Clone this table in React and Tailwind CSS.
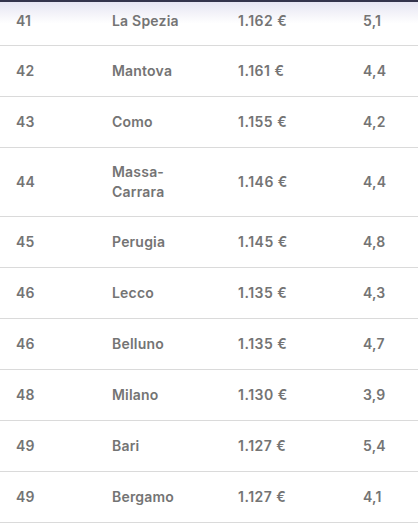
export default function App() {
  const rows = [
    ["41", "La Spezia", "1.162", "5,1"],
    ["42", "Mantova", "1.161", "4,4"],
    ["43", "Como", "1.155", "4,2"],
    ["44", "Massa-Carrara", "1.146", "4,4"],
    ["45", "Perugia", "1.145", "4,8"],
    ["46", "Lecco", "1.135", "4,3"],
    ["46", "Belluno", "1.135", "4,7"],
    ["48", "Milano", "1.130", "3,9"],
    ["49", "Bari", "1.127", "5,4"],
    ["49", "Bergamo", "1.127", "4,1"],
  ];
  return (
    <div className="w-[418px] h-[524px] overflow-hidden bg-white font-['Inter',sans-serif] text-[14px] font-semibold tracking-[0.2px] text-[#747474]">
      <div className="h-[2px] bg-[#34344c]" />
      {rows.map((r, i) => (
        <div
          key={i}
          className={
            "grid grid-cols-[96px_126px_125px_1fr] items-center pl-[16px] border-b border-[#dadada] leading-[20px] " +
            (i === 0
              ? "h-[44px] pb-[6px] bg-gradient-to-b from-[#e6e5f2] via-white to-white"
              : i === 3
              ? "h-[69px]"
              : "h-[51px]")
          }
        >
          <div>{r[0]}</div>
          <div className="max-w-[80px]">{r[1]}</div>
          <div className="tracking-[0.5px]">
            {r[2]}
            <span className="ml-[4px]">€</span>
          </div>
          <div>{r[3]}</div>
        </div>
      ))}
    </div>
  );
}
